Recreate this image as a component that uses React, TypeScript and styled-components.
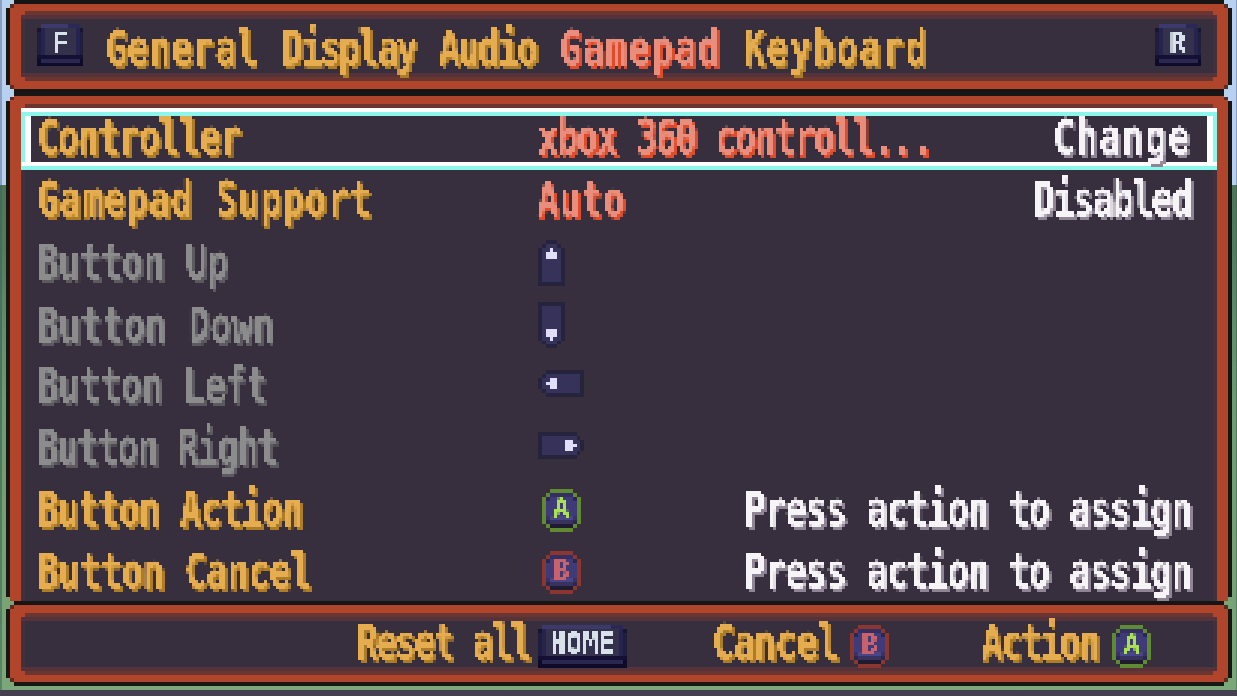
import React from "react";
import styled, { createGlobalStyle } from "styled-components";

const Global = createGlobalStyle`
  html, body { margin: 0; padding: 0; width: 1237px; height: 696px; overflow: hidden; }
  body { background: linear-gradient(#8f9bc0 0, #8f9bc0 185px, #47685a 185px, #5c8468 690px, #45404f 690px); }
  #root { width: 1237px; height: 696px; }
`;

const Screen = styled.div`
  box-sizing: border-box;
  width: 1234px;
  height: 690px;
  margin-left: 2px;
  padding: 0 4px 4px 4px;
  display: flex;
  flex-direction: column;
  background: linear-gradient(#b6d2f1 0, #b6d2f1 185px, #4d7658 185px, #527c5e 250px, #5f8d68 320px, #6d9c70 400px, #7ba878 690px);
`;

const stair = `polygon(8px 0, calc(100% - 8px) 0, calc(100% - 8px) 4px, calc(100% - 4px) 4px, calc(100% - 4px) 8px, 100% 8px, 100% calc(100% - 8px), calc(100% - 4px) calc(100% - 8px), calc(100% - 4px) calc(100% - 4px), calc(100% - 8px) calc(100% - 4px), calc(100% - 8px) 100%, 8px 100%, 8px calc(100% - 4px), 4px calc(100% - 4px), 4px calc(100% - 8px), 0 calc(100% - 8px), 0 8px, 4px 8px, 4px 4px, 8px 4px)`;

const Frame = styled.section<{ $top?: number; $bottom?: number; $overlap?: boolean }>`
  position: relative;
  z-index: ${(p) => (p.$overlap ? 2 : 1)};
  margin-top: ${(p) => (p.$overlap ? "-4px" : "0")};
  padding: ${(p) => p.$top ?? 4}px 4px ${(p) => p.$bottom ?? 4}px;
  background: #171615;
  clip-path: ${stair};
`;

const corner = "linear-gradient(#5c2b22, #5c2b22)";
const Plate = styled.div<{ $top: number; $bottom: number }>`
  padding: ${(p) => p.$top}px 11px ${(p) => p.$bottom}px;
  background-color: #b0452c;
  background-image: ${corner}, ${corner}, ${corner}, ${corner};
  background-size: 4px 4px;
  background-repeat: no-repeat;
  background-position: 0 0, 100% 0, 0 100%, 100% 100%;
`;

const band = (c: string) => `linear-gradient(${c}, ${c})`;
const Well = styled.div<{ $h: number }>`
  box-sizing: border-box;
  height: ${(p) => p.$h}px;
  background-color: transparent;
  background-image: ${band("#6b3530")}, ${band("#6b3530")}, ${band("#56323a")}, ${band("#56323a")}, ${band("#42303c")}, ${band("#42303c")}, ${band("#372f3d")};
  background-repeat: no-repeat;
  background-size: calc(100% - 8px) 4px, calc(100% - 8px) 4px, 100% 4px, 100% 4px, 4px 100%, 4px 100%, calc(100% - 8px) 100%;
  background-position: 4px 0, 4px 100%, 0 4px, 0 calc(100% - 4px), 0 0, 100% 0, 4px 0;
  clip-path: polygon(4px 0, calc(100% - 4px) 0, calc(100% - 4px) 4px, 100% 4px, 100% calc(100% - 4px), calc(100% - 4px) calc(100% - 4px), calc(100% - 4px) 100%, 4px 100%, 4px calc(100% - 4px), 0 calc(100% - 4px), 0 4px, 4px 4px);
`;

const Tabs = styled(Well)`
  display: flex;
  align-items: center;
  justify-content: space-between;
  padding: 0 16px 2px;
`;

const TabList = styled.nav`
  flex: 1;
  display: flex;
  gap: 23px;
  padding-left: 22px;
  margin-top: 10px;
`;

const Rows = styled.div`
  padding-top: 4px;
  background-color: transparent;
  background-image: ${band("#6b3530")}, ${band("#42303c")}, ${band("#42303c")}, ${band("#372f3d")};
  background-repeat: no-repeat;
  background-size: calc(100% - 8px) 4px, 4px 100%, 4px 100%, calc(100% - 8px) 100%;
  background-position: 4px 0, 0 4px, 100% 4px, 4px 4px;
`;

const Row = styled.div<{ $selected?: boolean }>`
  box-sizing: border-box;
  height: 62px;
  display: grid;
  grid-template-columns: 500px 1fr auto;
  align-items: center;
  padding: 8px 25px 8px 16px;
  ${(p) =>
    p.$selected
      ? `
    background: #372f3d;
    box-shadow:
      inset 0 4px 0 #fff,
      inset 0 8px 0 #8cf6ec,
      inset 0 -4px 0 #8cf6ec,
      inset 0 -8px 0 #fff,
      inset 4px 0 0 #8cf6ec,
      inset 10px 0 0 #fff,
      inset -4px 0 0 #8cf6ec,
      inset -10px 0 0 #fff;
  `
      : ""}
`;

const Actions = styled(Well)`
  display: grid;
  grid-template-columns: 606px 262px 262px;
  align-items: center;
`;

const Action = styled.div`
  justify-self: end;
  display: flex;
  align-items: center;
`;

const tones = {
  gold: ["#e5ad50", "#ad7c26"],
  coral: ["#e98d7c", "#df4c2b"],
  white: ["#f7f4f7", "#8f8595"],
  grey: ["#8d8c8d", "#5c5a60"],
} as const;
type Tone = keyof typeof tones;

const Pixels = styled.span`
  display: inline-block;
  filter: url(#px);
  padding: 0 4px;
  margin: 0 -4px 3px;
  white-space: nowrap;
`;

const Glyphs = styled.span<{ $tone: Tone; $track: number }>`
  display: inline-block;
  font-family: "DejaVu Sans Mono", "Liberation Mono", monospace;
  font-weight: 700;
  font-size: 36px;
  line-height: 44px;
  letter-spacing: ${(p) => p.$track - 1.47}px;
  transform: scaleY(1.36);
  color: ${(p) => tones[p.$tone][0]};
  text-shadow: 2.5px 2px 0 ${(p) => tones[p.$tone][1]};
`;

const Label: React.FC<{ tone: Tone; track: number; children: React.ReactNode }> = ({ tone, track, children }) => (
  <Pixels>
    <Glyphs $tone={tone} $track={track}>{children}</Glyphs>
  </Pixels>
);

const Right = styled.div`
  justify-self: end;
  grid-column: 3;
  padding-right: 1px;
`;

const IconSlot = styled.div<{ $inset?: number; $lift: number }>`
  display: flex;
  padding-left: ${(p) => p.$inset ?? 0}px;
  margin-bottom: ${(p) => p.$lift * 2}px;
`;

const Spacer = styled.span<{ $w: number }>`
  display: inline-block;
  width: ${(p) => p.$w}px;
`;

/* key caps */
const Cap = styled.span<{ $w: number }>`
  position: relative;
  flex: none;
  display: inline-block;
  width: ${(p) => p.$w}px;
  height: 42.5px;
  svg { display: block; width: 100%; height: 100%; }
`;

const CapLetter = styled.span<{ $color: string }>`
  position: absolute;
  left: 0;
  right: 0;
  top: 5px;
  text-align: center;
  font-family: "DejaVu Sans Mono", "Liberation Mono", monospace;
  font-weight: 700;
  font-size: 27px;
  line-height: 1;
  color: ${(p) => p.$color};
  filter: url(#px);
`;

const HomeLetter = styled(CapLetter)`
  font-size: 26px;
  letter-spacing: 0.6px;
  transform: scaleY(1.12);
`;

const KeyCap: React.FC<{ cols: number; label: string }> = ({ cols, label }) => (
  <Cap $w={cols * 3.866}>
    <svg viewBox={`0 0 ${cols} 11`} shapeRendering="crispEdges" aria-hidden>
      <rect x="0" y="1" width={cols} height="10" fill="#1f1e3d" />
      <rect x="1" y="0" width={cols - 2} height="1" fill="#3b3a6b" />
      <rect x={cols - 4} y="0" width="3" height="1" fill="#2a2955" />
      <rect x="0" y="1" width="1" height="1" fill="#171630" />
      <rect x={cols - 1} y="1" width="1" height="1" fill="#171630" />
      <rect x="1" y="1" width={cols - 2} height="7" fill="#26244f" />
      <rect x="2" y="1" width={cols - 4} height="7" fill="#34314c" />
      <rect x="0" y="8" width={cols} height="1" fill="#141033" />
      <rect x="1" y="9" width={cols - 2} height="1" fill="#2a2850" />
      <rect x="0" y="9" width="1" height="2" fill="#0e0b28" />
      <rect x={cols - 1} y="9" width="1" height="2" fill="#0e0b28" />
      <rect x="0" y="10" width={cols} height="1" fill="#0e0b28" />
    </svg>
    {label.length > 1 ? (
      <HomeLetter $color="#d9e2ea">{label}</HomeLetter>
    ) : (
      <CapLetter $color="#d9e2ea">{label}</CapLetter>
    )}
  </Cap>
);

const RoundButton: React.FC<{ label: "A" | "B" }> = ({ label }) => {
  const ring = label === "A" ? "#608a32" : "#8b3730";
  const ink = label === "A" ? "#a9e251" : "#c9626b";
  return (
    <Cap $w={38.66}>
      <svg viewBox="0 0 10 11" shapeRendering="crispEdges" aria-hidden>
        <rect x="2" y="0" width="6" height="11" fill={ring} />
        <rect x="1" y="1" width="8" height="9" fill={ring} />
        <rect x="0" y="2" width="10" height="7" fill={ring} />
        <rect x="2" y="1" width="6" height="9" fill="#332f63" />
        <rect x="1" y="2" width="8" height="7" fill="#3f3a78" />
        <rect x="1" y="2" width="1" height="1" fill="#2a2752" />
        <rect x="8" y="2" width="1" height="1" fill="#2a2752" />
        <rect x="1" y="7" width="8" height="1" fill="#38345f" />
        <rect x="2" y="7" width="6" height="1" fill="#4a4488" />
        <rect x="1" y="8" width="8" height="1" fill="#2a2750" />
        <rect x="2" y="8" width="6" height="1" fill="#37335e" />
        <rect x="2" y="9" width="6" height="1" fill="#1f1c30" />
      </svg>
      <CapLetter $color={ink}>{label}</CapLetter>
    </Cap>
  );
};

const DpadIcon: React.FC<{ dir: "up" | "down" | "left" | "right" }> = ({ dir }) => {
  const vertical = dir === "up" || dir === "down";
  const t = {
    up: "",
    down: "matrix(1 0 0 -1 0 12)",
    left: "matrix(0 1 1 0 0 0)",
    right: "matrix(0 1 -1 0 12 0)",
  }[dir];
  return (
    <svg
      width={vertical ? 27 : 46.4}
      height={vertical ? 46.4 : 27}
      viewBox={vertical ? "0 0 7 12" : "0 0 12 7"}
      shapeRendering="crispEdges"
      aria-hidden
    >
      <g transform={t}>
        <rect x="2" y="0" width="3" height="12" fill="#26233d" />
        <rect x="1" y="1" width="5" height="11" fill="#26233d" />
        <rect x="0" y="2" width="7" height="10" fill="#26233d" />
        <rect x="2" y="1" width="3" height="10" fill="#36325a" />
        <rect x="1" y="2" width="5" height="9" fill="#36325a" />
        <rect x="3" y="2" width="1" height="1" fill="#e2ddf8" />
        <rect x="2" y="3" width="3" height="2" fill="#e2ddf8" />
      </g>
    </svg>
  );
};

const App: React.FC = () => (
  <>
    <Global />
    <svg width="0" height="0" style={{ position: "absolute" }} aria-hidden>
      <filter id="px" x="-5%" y="-40%" width="110%" height="180%" colorInterpolationFilters="sRGB">
        <feFlood x="1" y="1" width="1" height="1" floodColor="#000" />
        <feComposite width="3" height="3" />
        <feTile result="grid" />
        <feComponentTransfer in="SourceGraphic" result="hard">
          <feFuncA type="linear" slope="4" intercept="-1.4" />
        </feComponentTransfer>
        <feComposite in="hard" in2="grid" operator="in" />
        <feMorphology operator="dilate" radius="1" />
      </filter>
    </svg>
    <Screen>
      <Frame>
        <Plate $top={7} $bottom={8}>
          <Tabs $h={70}>
            <KeyCap cols={12} label="F" />
            <TabList>
              <Label tone="gold" track={1.66}>General</Label>
              <Label tone="gold" track={-1.06}>Display</Label>
              <Label tone="gold" track={-0.6}>Audio</Label>
              <Label tone="coral" track={2.8}>Gamepad</Label>
              <Label tone="gold" track={2.9}>Keyboard</Label>
            </TabList>
            <KeyCap cols={12} label="R" />
          </Tabs>
        </Plate>
      </Frame>
      <Frame $top={3} $bottom={0}>
        <Plate $top={8} $bottom={1}>
          <Rows>
            <Row $selected>
              <Label tone="gold" track={0.1}>Controller</Label>
              <Label tone="coral" track={-0.45}>xbox 360 controll...</Label>
              <Right><Label tone="white" track={2.8}>Change</Label></Right>
            </Row>
            <Row>
              <Label tone="gold" track={2.1}>Gamepad Support</Label>
              <Label tone="coral" track={1.8}>Auto</Label>
              <Right><Label tone="white" track={-0.45}>Disabled</Label></Right>
            </Row>
            <Row>
              <Label tone="grey" track={1}>Button Up</Label>
              <IconSlot $inset={1} $lift={1.5}><DpadIcon dir="up" /></IconSlot>
            </Row>
            <Row>
              <Label tone="grey" track={1.4}>Button Down</Label>
              <IconSlot $inset={1} $lift={2}><DpadIcon dir="down" /></IconSlot>
            </Row>
            <Row>
              <Label tone="grey" track={0.7}>Button Left</Label>
              <IconSlot $inset={1} $lift={4.5}><DpadIcon dir="left" /></IconSlot>
            </Row>
            <Row>
              <Label tone="grey" track={-0.2}>Button Right</Label>
              <IconSlot $inset={1} $lift={4.5}><DpadIcon dir="right" /></IconSlot>
            </Row>
            <Row>
              <Label tone="gold" track={0.2}>Button Action</Label>
              <IconSlot $inset={5} $lift={1}><RoundButton label="A" /></IconSlot>
              <Right><Label tone="white" track={0.1}>Press action to assign</Label></Right>
            </Row>
            <Row>
              <Label tone="gold" track={0.9}>Button Cancel</Label>
              <IconSlot $inset={5} $lift={1}><RoundButton label="B" /></IconSlot>
              <Right><Label tone="white" track={0.1}>Press action to assign</Label></Right>
            </Row>
          </Rows>
        </Plate>
      </Frame>
      <Frame $overlap>
        <Plate $top={8} $bottom={7}>
          <Actions $h={62}>
            <Action>
              <Label tone="gold" track={-0.9}>Reset all</Label>
              <Spacer $w={8} />
              <IconSlot $lift={-2.5}><KeyCap cols={23} label="HOME" /></IconSlot>
            </Action>
            <Action>
              <Label tone="gold" track={0.8}>Cancel</Label>
              <Spacer $w={12} />
              <IconSlot $lift={-2.5}><RoundButton label="B" /></IconSlot>
            </Action>
            <Action>
              <Label tone="gold" track={-0.7}>Action</Label>
              <Spacer $w={14} />
              <IconSlot $lift={-2.5}><RoundButton label="A" /></IconSlot>
            </Action>
          </Actions>
        </Plate>
      </Frame>
    </Screen>
  </>
);

export default App;
